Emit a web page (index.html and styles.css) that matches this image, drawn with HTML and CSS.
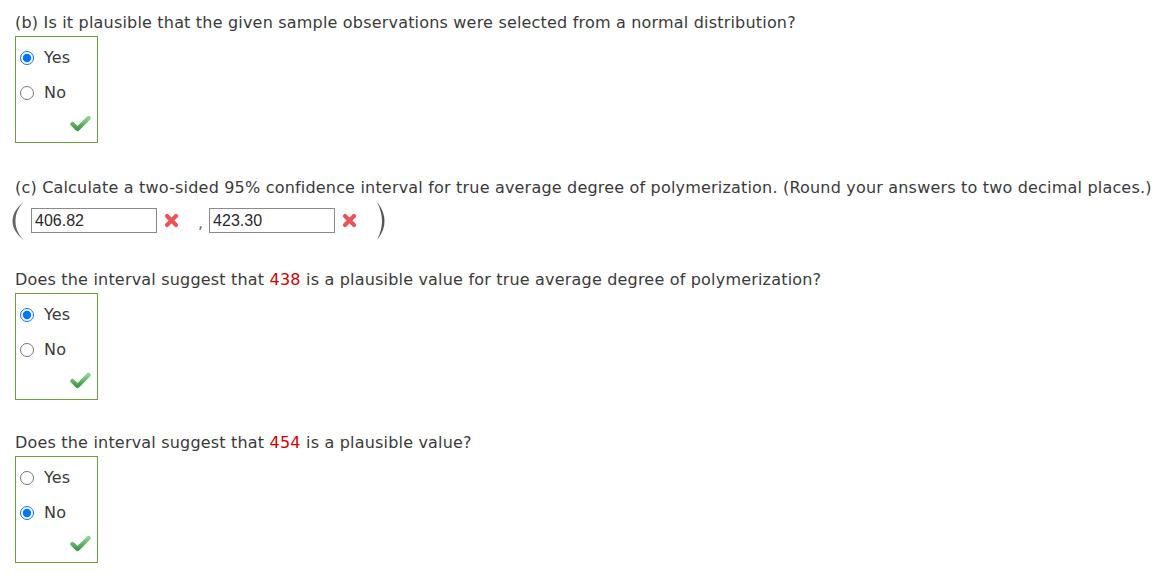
FILE: index.html
```html
<!DOCTYPE html>
<html>
<head>
<meta charset="utf-8">
<link rel="stylesheet" href="styles.css">
</head>
<body>
<div class="page">
  <p class="question">(b) Is it plausible that the given sample observations were selected from a normal distribution?</p>
  <div class="choices">
    <label class="choice"><input type="radio" name="b" checked><span>Yes</span></label>
    <label class="choice"><input type="radio" name="b"><span>No</span></label>
    <div class="mark">
      <svg width="21" height="17" viewBox="0 0 21 17"><defs><linearGradient id="g1" x1="0" y1="0" x2="0" y2="1"><stop offset="0" stop-color="#8fd18f"/><stop offset="1" stop-color="#3f9a47"/></linearGradient></defs><path d="M2.5 9 L7.5 14 L18.5 3" fill="none" stroke="url(#g1)" stroke-width="4.4" stroke-linecap="round" stroke-linejoin="round"/></svg>
    </div>
  </div>

  <p class="question q-c">(c) Calculate a two-sided 95% confidence interval for true average degree of polymerization. (Round your answers to two decimal places.)</p>
  <div class="interval">
    <svg class="paren" width="14" height="40" viewBox="0 0 14 40"><path d="M13 0.5 C4 8 1.5 14 1.5 20 C1.5 26 4 32 13 39.5 C6 32 4.5 26 4.5 20 C4.5 14 6 8 13 0.5 Z" fill="#666"/></svg>
    <input class="answer" type="text" value="406.82">
    <svg class="wrong" width="15" height="15" viewBox="0 0 15 15"><path d="M3 3 L12 12 M12 3 L3 12" stroke="#e8545a" stroke-width="4.2" stroke-linecap="round"/></svg>
    <span class="comma">,</span>
    <input class="answer" type="text" value="423.30">
    <svg class="wrong" width="15" height="15" viewBox="0 0 15 15"><path d="M3 3 L12 12 M12 3 L3 12" stroke="#e8545a" stroke-width="4.2" stroke-linecap="round"/></svg>
    <svg class="paren paren-r" width="10" height="40" viewBox="0 0 10 40"><path d="M1 1 C6.5 8 8.5 14 8.5 20 C8.5 26 6.5 32 1 39 C4.5 32 6 26 6 20 C6 14 4.5 8 1 1 Z" fill="#555"/></svg>
  </div>

  <p class="question q-d">Does the interval suggest that <span class="num">438</span> is a plausible value for true average degree of polymerization?</p>
  <div class="choices">
    <label class="choice"><input type="radio" name="d" checked><span>Yes</span></label>
    <label class="choice"><input type="radio" name="d"><span>No</span></label>
    <div class="mark">
      <svg width="21" height="17" viewBox="0 0 21 17"><defs><linearGradient id="g2" x1="0" y1="0" x2="0" y2="1"><stop offset="0" stop-color="#8fd18f"/><stop offset="1" stop-color="#3f9a47"/></linearGradient></defs><path d="M2.5 9 L7.5 14 L18.5 3" fill="none" stroke="url(#g2)" stroke-width="4.4" stroke-linecap="round" stroke-linejoin="round"/></svg>
    </div>
  </div>

  <p class="question q-e">Does the interval suggest that <span class="num">454</span> is a plausible value?</p>
  <div class="choices">
    <label class="choice"><input type="radio" name="e"><span>Yes</span></label>
    <label class="choice"><input type="radio" name="e" checked><span>No</span></label>
    <div class="mark">
      <svg width="21" height="17" viewBox="0 0 21 17"><defs><linearGradient id="g3" x1="0" y1="0" x2="0" y2="1"><stop offset="0" stop-color="#8fd18f"/><stop offset="1" stop-color="#3f9a47"/></linearGradient></defs><path d="M2.5 9 L7.5 14 L18.5 3" fill="none" stroke="url(#g3)" stroke-width="4.4" stroke-linecap="round" stroke-linejoin="round"/></svg>
    </div>
  </div>
</div>
</body>
</html>
```

FILE: styles.css
```css
html, body {
  margin: 0;
  padding: 0;
  background: #fff;
}
.page {
  padding: 11px 0 0 15px;
  font-family: "DejaVu Sans", Verdana, sans-serif;
  font-size: 16px;
  letter-spacing: 0.19px;
  color: #3a3a3a;
}
.question {
  margin: 0;
  line-height: 24px;
  white-space: nowrap;
}
.num {
  color: #d50000;
}
.choices {
  margin-top: 1px;
  width: 81px;
  height: 96px;
  border: 1px solid #6aa33a;
  display: flex;
  flex-direction: column;
  padding-top: 9px;
  box-sizing: content-box;
}
.choice {
  display: flex;
  align-items: center;
  height: 23px;
  margin-bottom: 12px;
}
.choice input {
  margin: 0 10px 0 4px;
  width: 14px;
  height: 14px;
}
.mark {
  display: flex;
  justify-content: flex-end;
  padding-right: 6px;
  margin-top: -1px;
}
.q-c {
  margin-top: 33px;
}
.interval {
  display: flex;
  align-items: center;
  height: 41px;
  letter-spacing: 0;
}
.paren {
  margin-left: -4px;
}
.answer {
  margin: 0 0 0 6px;
  width: 126px;
  height: 25px;
  box-sizing: border-box;
  border: 1px solid #8a8a8a;
  padding: 0 3px;
  font-family: "Liberation Sans", Arial, sans-serif;
  font-size: 16px;
  color: #2a2a2a;
  background: #fff;
  outline: none;
}
.wrong {
  margin-left: 7px;
}
.comma {
  margin: 4px 0 0 19px;
  color: #666;
}
.comma + .answer {
  margin-left: 6px;
}
.paren-r {
  margin-left: 19px;
}
.q-d {
  margin-top: 27px;
}
.q-e {
  margin-top: 31px;
}
```
